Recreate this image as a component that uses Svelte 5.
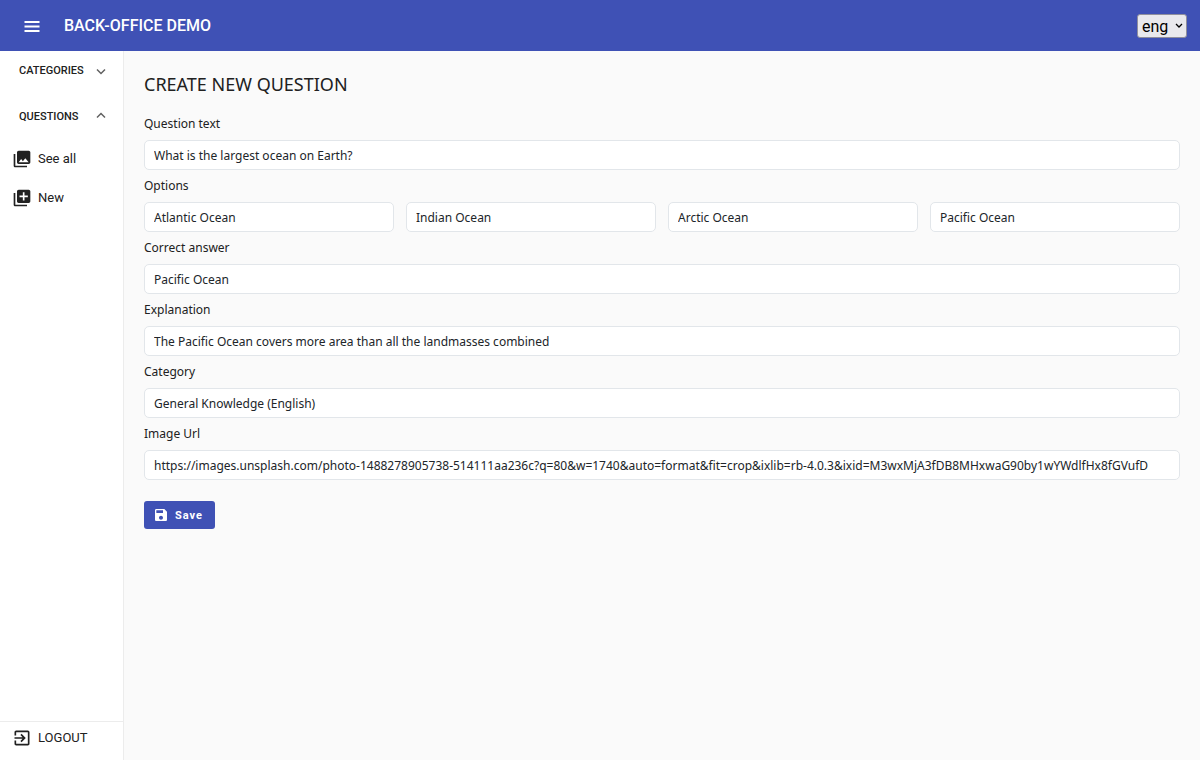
<script>
  let language = $state('eng');
  let showCategories = $state(false);
  let showQuestions = $state(true);
  let question = $state({
    text: 'What is the largest ocean on Earth?',
    options: ['Atlantic Ocean', 'Indian Ocean', 'Arctic Ocean', 'Pacific Ocean'],
    answer: 'Pacific Ocean',
    explanation: 'The Pacific Ocean covers more area than all the landmasses combined',
    category: 'General Knowledge (English)',
    image: 'https://images.unsplash.com/photo-1488278905738-514111aa236c?q=80&w=1740&auto=format&fit=crop&ixlib=rb-4.0.3&ixid=M3wxMjA3fDB8MHxwaG90by1wYWdlfHx8fGVufD'
  });
</script>

{#snippet chevron(open)}
  <svg class="chevron" viewBox="0 0 12 12" aria-hidden="true">
    <path d={open ? 'M2 6.500l4-4 4 4' : 'M2 4.500l4 4 4-4'} fill="none" stroke="currentColor" stroke-width="1.500" />
  </svg>
{/snippet}

<div class="page">
  <header>
    <button class="menu" aria-label="Menu">
      <svg viewBox="0 0 16 12" aria-hidden="true">
        <path d="M0.500 2h15M0.500 6.500h15M0.500 11h15" stroke="currentColor" stroke-width="1.800" />
      </svg>
    </button>
    <span class="brand">BACK-OFFICE DEMO</span>
    <div class="language">
      <select aria-label="Language" bind:value={language}>
        <option>eng</option>
      </select>
      <svg viewBox="0 0 8 6" aria-hidden="true"><path d="M1 1l3 3 3-3" fill="none" stroke="#000" stroke-width="1.300" /></svg>
    </div>
  </header>

  <div class="body">
    <nav>
      <button class="group" aria-expanded={showCategories} onclick={() => (showCategories = !showCategories)}>
        CATEGORIES {@render chevron(showCategories)}
      </button>
      <button class="group" aria-expanded={showQuestions} onclick={() => (showQuestions = !showQuestions)}>
        QUESTIONS {@render chevron(showQuestions)}
      </button>
      {#if showQuestions}
        <a class="item" href="#all">
          <svg viewBox="0 0 24 24" aria-hidden="true"><path d="M22 16V4c0-1.1-.9-2-2-2H8c-1.100 0-2 .9-2 2v12c0 1.100.9 2 2 2h12c1.100 0 2-.9 2-2zm-11-4l2.030 2.710L16 11l4 5H8l3-4zM2 6v14c0 1.100.9 2 2 2h14v-2H4V6H2z" /></svg>
          See all
        </a>
        <a class="item" href="#new">
          <svg viewBox="0 0 24 24" aria-hidden="true"><path d="M4 6H2v14c0 1.100.9 2 2 2h14v-2H4V6zm16-4H8c-1.100 0-2 .9-2 2v12c0 1.100.9 2 2 2h12c1.100 0 2-.9 2-2V4c0-1.100-.9-2-2-2zm-1 9h-4v4h-2v-4H9V9h4V5h2v4h4v2z" /></svg>
          New
        </a>
      {/if}
      <a class="item logout" href="#logout">
        <svg viewBox="0 0 24 24" aria-hidden="true"><path d="M10.090 15.590L11.500 17l5-5-5-5-1.410 1.410L12.670 11H3v2h9.670l-2.580 2.590zM19 3H5c-1.110 0-2 .9-2 2v4h2V5h14v14H5v-4H3v4c0 1.100.89 2 2 2h14c1.100 0 2-.9 2-2V5c0-1.100-.9-2-2-2z" /></svg>
        LOGOUT
      </a>
    </nav>

    <main>
      <h1>CREATE NEW QUESTION</h1>
      <form onsubmit={(e) => e.preventDefault()}>
        <label for="text">Question text</label>
        <input id="text" bind:value={question.text} />
        <label for="option-0">Options</label>
        <div class="options">
          {#each question.options as _, i}
            <input id="option-{i}" aria-label="Option {i + 1}" bind:value={question.options[i]} />
          {/each}
        </div>
        <label for="answer">Correct answer</label>
        <input id="answer" bind:value={question.answer} />
        <label for="explanation">Explanation</label>
        <input id="explanation" bind:value={question.explanation} />
        <label for="category">Category</label>
        <input id="category" bind:value={question.category} />
        <label for="image">Image Url</label>
        <input id="image" bind:value={question.image} />
        <button class="save">
          <svg viewBox="0 0 24 24" aria-hidden="true"><path d="M17 3H5c-1.110 0-2 .9-2 2v14c0 1.100.89 2 2 2h14c1.100 0 2-.9 2-2V7l-4-4zm-5 16c-1.660 0-3-1.340-3-3s1.340-3 3-3 3 1.340 3 3-1.340 3-3 3zm3-10H5V5h10v4z" /></svg>
          Save
        </button>
      </form>
    </main>
  </div>
</div>

<style>
  :global(body) {
    margin: 0;
    background: #fafafa;
  }
  .page {
    display: flex;
    flex-direction: column;
    min-height: 100vh;
    color: #212121;
    font-family: Roboto, sans-serif;
  }
  button {
    border: 0;
    background: none;
    font-family: inherit;
    color: inherit;
    cursor: pointer;
  }
  header {
    display: flex;
    align-items: center;
    padding: 12px 13px 11px 16px;
    background: #3f51b5;
    color: #fff;
  }
  .menu {
    display: flex;
    padding: 8px;
    margin-right: 16px;
  }
  .menu svg {
    width: 16px;
    height: 12px;
  }
  .brand {
    font-size: 16px;
    font-weight: 500;
    line-height: 20px;
  }
  .language {
    display: grid;
    align-items: center;
    margin-left: auto;
  }
  .language > * {
    grid-area: 1 / 1;
  }
  .language svg {
    width: 8px;
    height: 6px;
    justify-self: end;
    margin-right: 4px;
    pointer-events: none;
  }
  select {
    appearance: none;
    height: 24px;
    padding: 0 17px 0 4px;
    border: 1px solid #8f8f9d;
    border-radius: 3px;
    background: #e9e9ed;
    color: #000;
    font: 16px Roboto, sans-serif;
  }
  .body {
    display: flex;
    flex: 1;
  }
  nav {
    display: flex;
    flex-direction: column;
    flex: none;
    width: 123px;
    border-right: 1px solid #ececec;
    background: #fff;
  }
  .group {
    display: flex;
    align-items: center;
    justify-content: space-between;
    padding: 12px 16px 18px 19px;
    font-size: 11px;
    font-weight: 500;
    line-height: 16px;
  }
  .group + .item {
    margin-top: -4px;
  }
  .chevron {
    width: 12px;
    height: 12px;
    color: #616161;
  }
  .item {
    display: flex;
    align-items: center;
    gap: 6px;
    padding: 10px 12px 9px;
    font-size: 13px;
    line-height: 20px;
    color: inherit;
    text-decoration: none;
  }
  .item svg {
    width: 20px;
    height: 20px;
    fill: currentColor;
  }
  .logout {
    margin-top: auto;
    padding: 6px 12px 12px;
    border-top: 1px solid #ececec;
  }
  main {
    flex: 1;
    min-width: 0;
    padding: 20px;
    font-family: "Segoe UI", "Noto Sans", sans-serif;
  }
  h1 {
    margin: 0 0 17px;
    font-size: 18px;
    font-weight: 400;
    line-height: 26px;
  }
  form {
    display: flex;
    flex-direction: column;
    gap: 6px;
  }
  label {
    font-size: 12px;
    line-height: 20px;
  }
  input {
    box-sizing: border-box;
    width: 100%;
    min-width: 0;
    height: 30px;
    padding: 0 9px;
    border: 1px solid #e2e6ea;
    border-radius: 5px;
    background: #fff;
    color: #212529;
    font-family: inherit;
    font-size: 12px;
  }
  .options {
    display: grid;
    grid-template-columns: repeat(4, 1fr);
    gap: 12px;
  }
  .save {
    display: flex;
    align-items: center;
    align-self: flex-start;
    gap: 6px;
    height: 28px;
    margin-top: 15px;
    padding: 0 12px 0 9px;
    border-radius: 3px;
    background: #3f51b5;
    color: #fff;
    font-family: Roboto, sans-serif;
    font-size: 11px;
    font-weight: 700;
    letter-spacing: 1px;
  }
  .save svg {
    width: 16px;
    height: 16px;
    fill: currentColor;
  }
</style>
